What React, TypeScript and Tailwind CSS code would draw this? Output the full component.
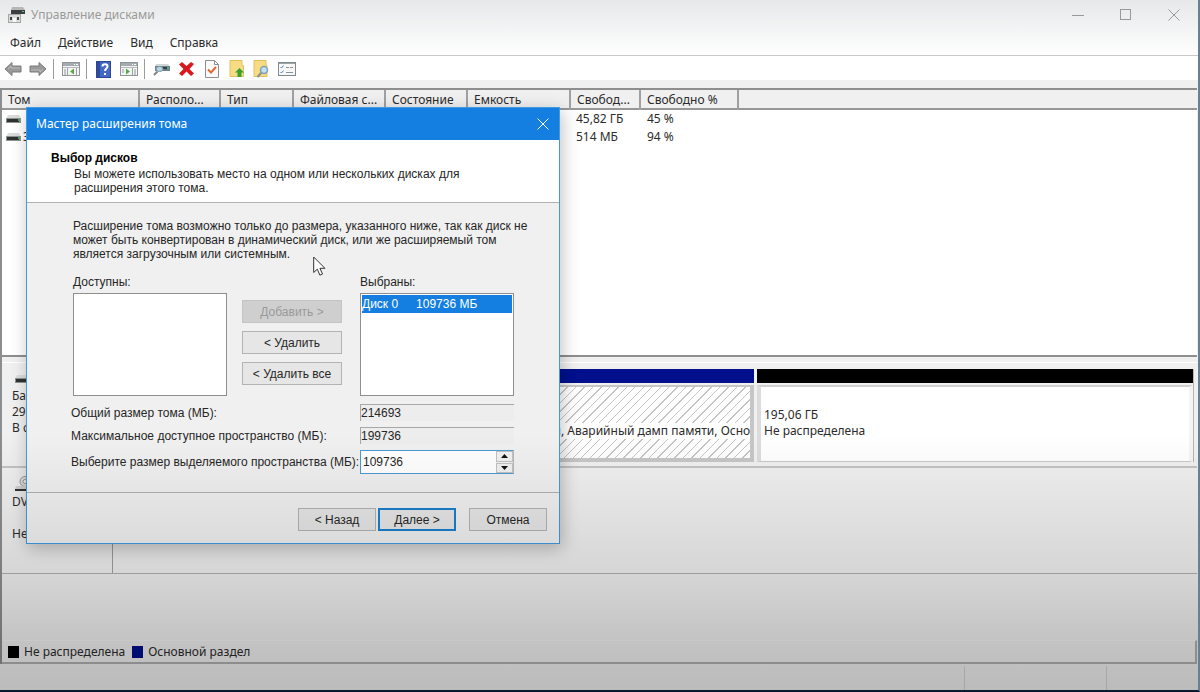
import React, { useState } from 'react';

const MENU = ['Файл', 'Действие', 'Вид', 'Справка'];

const COLUMNS = [
    { title: 'Том', width: 'w-[137px]' },
    { title: 'Располо...', width: 'w-[81px]' },
    { title: 'Тип', width: 'w-[73px]' },
    { title: 'Файловая с...', width: 'w-[92px]' },
    { title: 'Состояние', width: 'w-[82px]' },
    { title: 'Емкость', width: 'w-[103px]' },
    { title: 'Свобод...', width: 'w-[70px]' },
    { title: 'Свободно %', width: 'w-[98px]' },
];

const VOLUMES = [
    { name: '', free: '45,82 ГБ', percent: '45 %' },
    { name: 'З', free: '514 МБ', percent: '94 %' },
];

const DriveIcon: React.FC = () => (
    <svg width="15" height="9" viewBox="0 0 15 9" className="shrink-0">
        <path d="M2 0h11l2 4H0z" fill="#d9dcdb" />
        <rect y="3" width="15" height="5" fill="#8d9391" />
        <rect x="1" y="4" width="12" height="3" fill="#2e3332" />
        <rect x="12" y="4" width="2" height="2" fill="#4fa070" />
    </svg>
);

const AppIcon: React.FC = () => (
    <svg width="17" height="17" viewBox="0 0 17 17">
        <path d="M4 0h11l2 3H3z" fill="#b4b8b6" />
        <rect x="3" y="3" width="14" height="4" fill="#3b3f3f" />
        <rect x="14" y="4" width="2" height="1" fill="#63b383" />
        <path d="M0 7h13v9H0z" fill="#a4a7a6" />
        <path d="M1 8h11v7H1z" fill="#dcdcdc" />
        <path d="M2 10h2v3H2zM9 10h2v3H9z" fill="#444" />
        <path d="M5 11h3v4H5z" fill="#fff" />
    </svg>
);

const ArrowIcon: React.FC<{ flip?: boolean }> = ({ flip }) => (
    <svg width="18" height="16" viewBox="0 0 18 16" className={flip ? 'rotate-180' : ''}>
        <path d="M1 8l7-6.5V5h9v6H8v3.5z" fill="#9a9a9a" stroke="#7b7b7b" strokeLinejoin="round" />
        <path d="M4 8l3-3v2h9" fill="none" stroke="#b9b9b9" />
    </svg>
);

const ConsoleIcon: React.FC<{ right?: boolean }> = ({ right }) => (
    <svg width="18" height="16" viewBox="0 0 18 16">
        <rect x=".5" y="1.5" width="17" height="13" fill="#f5f5f5" stroke="#8f9496" />
        <rect x="1" y="2" width="16" height="3" fill="#a4acb1" />
        <path d="M12 3.5h1M14 3.5h2" stroke="#fff" />
        <path d="M1 6.5h16" stroke="#b5babd" />
        {right ? (
            <>
                <path d="M12.5 7v7" stroke="#9ba1a5" />
                <path d="M14 9h2M14 11h2M14 13h2M2 9h2M2 11h2" stroke="#8c969c" />
                <path d="M6 7.5v6l4-3z" fill="#57a844" />
            </>
        ) : (
            <>
                <path d="M5.5 7v7M14.5 7v7" stroke="#9ba1a5" />
                <path d="M2 9h2M2 11h2M2 13h2" stroke="#8c969c" />
                <path d="M12 7.5v6l-4-3z" fill="#57a844" />
            </>
        )}
    </svg>
);

const HelpIcon: React.FC = () => (
    <svg width="15" height="17" viewBox="0 0 15 17">
        <rect x=".5" y=".5" width="14" height="16" fill="#4468c4" stroke="#2d4690" />
        <rect x="1" y="1" width="3" height="15" fill="#2f4b9e" />
        <path d="M6.500 5.500c0-3 5-3 5 0 0 2-2.500 2-2.500 4.500" fill="none" stroke="#fff" strokeWidth="2" />
        <rect x="8" y="12" width="2" height="2" fill="#fff" />
    </svg>
);

const DriveSearchIcon: React.FC = () => (
    <svg width="17" height="16" viewBox="0 0 17 16">
        <path d="M3 3h12l2 3H2z" fill="#cfd6d8" />
        <rect x="2" y="5" width="15" height="5" fill="#6f8088" />
        <rect x="9" y="6" width="6" height="2" fill="#2f3d44" />
        <rect x="14" y="6" width="2" height="2" fill="#4fb08a" />
        <ellipse cx="6.500" cy="8" rx="3.500" ry="2.500" fill="#b6d4e3" stroke="#7d98a6" />
        <path d="M4.500 10.500L1 14" stroke="#7c8589" strokeWidth="2" />
    </svg>
);

const DeleteIcon: React.FC = () => (
    <svg width="17" height="16" viewBox="0 0 17 16">
        <path d="M1 3.500L4 1l4.500 4L13 1l3 2-4.500 5 4.500 4.500-3 2.500-4.500-4.500L4 15l-3-2.500L5.500 8z" fill="#d8181c" />
    </svg>
);

const DocCheckIcon: React.FC = () => (
    <svg width="14" height="18" viewBox="0 0 14 18">
        <path d="M.5.5h9l4 4v13H.5z" fill="#fafafa" stroke="#8d8d8d" />
        <path d="M9.500.5v4h4" fill="none" stroke="#8d8d8d" />
        <path d="M3 9.500l3 3 5-5.500" fill="none" stroke="#dd6a33" strokeWidth="2" />
    </svg>
);

const FolderUpIcon: React.FC = () => (
    <svg width="16" height="18" viewBox="0 0 16 18">
        <path d="M1 .5h12v5h1.500v11H1z" fill="#f7dc84" stroke="#e3c15c" />
        <path d="M10.500 8l4.500 4.500h-2.500V17h-4v-4.500H6z" fill="#3c9f35" />
    </svg>
);

const FolderSearchIcon: React.FC = () => (
    <svg width="17" height="18" viewBox="0 0 17 18">
        <path d="M1 .5h12v5h1v11H1z" fill="#f7dc84" stroke="#e3c15c" />
        <path d="M8.500 12.500L4.500 17" stroke="#8a8f93" strokeWidth="2" />
        <circle cx="11" cy="10" r="3.500" fill="#c4e0f0" stroke="#7ea3b8" strokeWidth="1.500" />
    </svg>
);

const ListIcon: React.FC = () => (
    <svg width="18" height="14" viewBox="0 0 18 14">
        <rect x=".5" y=".5" width="17" height="13" fill="#f8f8f8" stroke="#83888b" />
        <path d="M1 1.500h16" stroke="#9fa6aa" />
        <path d="M2.500 5l1 1 2-2.500M2.500 10l1 1 2-2.500" fill="none" stroke="#4a86c5" />
        <path d="M8 5.500h3M12 5.500h3M8 10.500h7" stroke="#88929a" />
    </svg>
);

const TOOLS = [
    { label: 'Назад', icon: <ArrowIcon /> },
    { label: 'Вперед', icon: <ArrowIcon flip />, divider: true },
    { label: 'Дерево консоли', icon: <ConsoleIcon />, divider: true },
    { label: 'Справка', icon: <HelpIcon /> },
    { label: 'Панель действий', icon: <ConsoleIcon right />, divider: true },
    { label: 'Подключить диск', icon: <DriveSearchIcon /> },
    { label: 'Удалить', icon: <DeleteIcon /> },
    { label: 'Проверить', icon: <DocCheckIcon /> },
    { label: 'Вверх', icon: <FolderUpIcon /> },
    { label: 'Поиск', icon: <FolderSearchIcon /> },
    { label: 'Свойства', icon: <ListIcon /> },
];

const CaptionButtons: React.FC = () => (
    <div className="flex text-[#999]">
        <button aria-label="Свернуть" className="flex h-[30px] w-12 items-center justify-center">
            <svg width="12" height="12" viewBox="0 0 12 12" stroke="currentColor"><path d="M0 6.500h12" /></svg>
        </button>
        <button aria-label="Развернуть" className="flex h-[30px] w-12 items-center justify-center">
            <svg width="12" height="12" viewBox="0 0 12 12" stroke="currentColor" fill="none"><rect x=".5" y=".5" width="10" height="10" /></svg>
        </button>
        <button aria-label="Закрыть" className="flex h-[30px] w-12 items-center justify-center">
            <svg width="12" height="12" viewBox="0 0 12 12" stroke="currentColor"><path d="M.5.5l11 11M11.500.5l-11 11" /></svg>
        </button>
    </div>
);

const VolumeTable: React.FC = () => (
    <div className="h-[269px] border-t-2 border-b-2 border-[#8e8e8e] bg-white">
        <table className="w-full table-fixed border-collapse text-left">
            <thead>
                <tr className="h-[19px] border-b-2 border-[#979797] bg-[#f0f0f0]">
                    {COLUMNS.map(col => (
                        <th key={col.title} className={`${col.width} overflow-hidden border-r-2 border-[#a0a0a0] pt-px pb-0 pl-[6px] font-normal whitespace-nowrap`}>
                            {col.title}
                        </th>
                    ))}
                    <th aria-hidden="true" />
                </tr>
            </thead>
            <tbody className="leading-[18px]">
                {VOLUMES.map(volume => (
                    <tr key={volume.free}>
                        <td className="p-0 pl-1">
                            <div className="flex items-center gap-[2px]"><DriveIcon />{volume.name}</div>
                        </td>
                        <td colSpan={5} />
                        <td className="p-0 pl-[6px] whitespace-nowrap">{volume.free}</td>
                        <td className="p-0 pl-[7px] whitespace-nowrap">{volume.percent}</td>
                        <td />
                    </tr>
                ))}
            </tbody>
        </table>
    </div>
);

const HATCH = 'bg-[repeating-linear-gradient(135deg,#fff_0px,#fff_5px,#c4c4c4_5px,#c4c4c4_6px)]';

const DiskMap: React.FC = () => (
    <div className="flex-1 bg-[#f0f0f0] pt-[5px]">
        <div className="flex h-[106px] border-t border-b-2 border-t-white border-b-[#c4c4c4]">
            <div className="w-[111px] shrink-0 border-r border-[#a0a0a0] pt-3 pl-[10px] leading-4">
                <div className="h-[13px] pl-[3px]"><DriveIcon /></div>
                <p>Базовый</p>
                <p>298,09 ГБ</p>
                <p>В сети</p>
            </div>
            <div className="flex min-w-0 flex-1 gap-[3px] pt-[6px] pr-[3px] pb-1 pl-[3px]">
                <div className="flex w-[218px] shrink-0 flex-col gap-[3px]">
                    <div className="h-[14px] bg-[#00108c]" />
                    <div className="flex-1 border border-[#bbb] bg-white" />
                </div>
                <div className="flex w-[417px] shrink-0 flex-col gap-[2px]">
                    <div className="h-[14px] bg-[#00108c]" />
                    <div className={`flex flex-1 items-center border-2 border-r-4 border-b-4 border-[#c6c6c6] pt-4 ${HATCH}`}>
                        <p className="w-full overflow-hidden bg-white pl-3 leading-4 whitespace-nowrap">
                            Исправен (Загрузка, Файл подкачки, Аварийный дамп памяти, Осно
                        </p>
                    </div>
                </div>
                <div className="flex min-w-0 flex-1 flex-col gap-[2px] border-r border-[#b4b4b4]">
                    <div className="h-[14px] bg-black" />
                    <div className="flex flex-1 flex-col justify-center border-t-2 border-r-4 border-b border-l-4 border-t-[#d0d0d0] border-r-[#f4f4f4] border-b-[#c8c8c8] border-l-[#dcdcdc] bg-white pb-[2px] pl-[3px] leading-4">
                        <p>195,06 ГБ</p>
                        <p>Не распределена</p>
                    </div>
                </div>
            </div>
        </div>
        <div className="flex h-[106px] border-b border-[#b0b0b0]">
            <div className="w-[111px] shrink-0 border-r border-[#a0a0a0] pt-2 pl-[10px] leading-4">
                <svg width="20" height="18" viewBox="0 0 20 18" className="ml-[2px]">
                    <circle cx="11" cy="5.500" r="5" fill="#e0e0e0" stroke="#999" />
                    <circle cx="11" cy="5.500" r="2" fill="#f5f5f5" stroke="#999" />
                    <path d="M2 10h15l2 3H1z" fill="#d3d3d3" />
                    <path d="M1 13h16v2H1z" fill="#333" />
                </svg>
                <p>DVD (D:)</p>
                <p className="pt-4">Нет носителя</p>
            </div>
        </div>
    </div>
);

const PushButton: React.FC<React.ButtonHTMLAttributes<HTMLButtonElement> & { primary?: boolean }> = ({ primary, className = '', ...rest }) => (
    <button
        {...rest}
        className={`flex h-[23px] items-center justify-center bg-[#e6e6e6] disabled:border-[#c4c4c4] disabled:bg-[#cfcfcf] disabled:text-[#9a9a9a] ${primary ? 'border-2 border-[#1a7fcc]' : 'border border-[#b3b3b3]'} ${className}`}
    />
);

const ExtendWizard: React.FC = () => {
    const [size, setSize] = useState(109736);

    return (
        <section
            role="dialog"
            aria-labelledby="wizard-title"
            className="absolute top-[107px] left-[26px] w-[534px] border border-[#3f9ae0] bg-[#f0f0f0] font-['Liberation_Sans',Arial,sans-serif] text-[12px] leading-[14px] text-[#262626] shadow-[2px_4px_16px_rgba(0,0,0,0.25)]"
        >
            <header className="flex h-8 items-center justify-between bg-[#147fe0] px-[9px] font-['Noto_Sans',sans-serif] text-white">
                <h1 id="wizard-title">Мастер расширения тома</h1>
                <button aria-label="Закрыть" className="p-px">
                    <svg width="12" height="12" viewBox="0 0 12 12" stroke="currentColor"><path d="M.5.5l11 11M11.500.5l-11 11" /></svg>
                </button>
            </header>

            <div className="h-[63px] border-b border-[#b0b0b0] bg-white pt-[11px] pl-6">
                <h2 className="font-bold text-black">Выбор дисков</h2>
                <p className="pt-[2px] pl-[23px]">
                    Вы можете использовать место на одном или нескольких дисках для<br />
                    расширения этого тома.
                </p>
            </div>

            <div className="h-[290px] border-b border-[#b0b0b0] pt-4 pr-[45px] pl-[46px]">
                <p className="-mr-8">
                    Расширение тома возможно только до размера, указанного ниже, так как диск не<br />
                    может быть конвертирован в динамический диск, или же расширяемый том<br />
                    является загрузочным или системным.
                </p>

                <div className="flex pt-[14px]">
                    <div className="w-[154px]">
                        <p id="available" className="pb-1">Доступны:</p>
                        <ul role="listbox" aria-labelledby="available" className="h-[103px] border border-[#8f8f8f] bg-white" />
                    </div>
                    <div className="ml-[15px] flex w-[100px] flex-col gap-2 pt-[25px]">
                        <PushButton disabled>Добавить &gt;</PushButton>
                        <PushButton>&lt; Удалить</PushButton>
                        <PushButton>&lt; Удалить все</PushButton>
                    </div>
                    <div className="ml-[18px] w-[154px]">
                        <p id="selected" className="pb-1">Выбраны:</p>
                        <ul role="listbox" aria-labelledby="selected" className="h-[103px] border border-[#8f8f8f] bg-white p-px">
                            <li role="option" aria-selected="true" className="flex h-[18px] items-center gap-[18px] bg-[#147fe0] text-white">
                                <span>Диск 0</span>
                                <span>109736 МБ</span>
                            </li>
                        </ul>
                    </div>
                </div>

                <div className="-ml-[2px] flex flex-col gap-[6px] pt-2">
                    <div className="flex items-center justify-between">
                        <label htmlFor="total">Общий размер тома (МБ):</label>
                        <input id="total" readOnly value="214693" className="h-[17px] w-[154px] border-t border-l border-[#a8a8a8] bg-[#ededed]" />
                    </div>
                    <div className="flex items-center justify-between">
                        <label htmlFor="max">Максимальное доступное пространство (МБ):</label>
                        <input id="max" readOnly value="199736" className="h-[17px] w-[154px] border-t border-l border-[#a8a8a8] bg-[#ededed]" />
                    </div>
                    <div className="flex items-center justify-between">
                        <label htmlFor="size" className="whitespace-nowrap">Выберите размер выделяемого пространства (МБ):</label>
                        <div className="flex h-6 w-[154px] shrink-0 border border-[#4b9bd0] border-r-[#b8b8b8] bg-white">
                            <input
                                id="size"
                                inputMode="numeric"
                                value={size}
                                onChange={e => setSize(Number(e.target.value) || 0)}
                                className="min-w-0 flex-1 pl-[2px] outline-none"
                            />
                            <div className="flex w-[17px] flex-col gap-px bg-[#f0f0f0]">
                                <button aria-label="Больше" onClick={() => setSize(size + 1)} className="flex flex-1 items-center justify-center border border-[#c2c2c2]">
                                    <svg width="7" height="4" viewBox="0 0 7 4"><path d="M0 4l3.500-4L7 4z" fill="#111" /></svg>
                                </button>
                                <button aria-label="Меньше" onClick={() => setSize(size - 1)} className="flex flex-1 items-center justify-center border border-[#c2c2c2]">
                                    <svg width="7" height="4" viewBox="0 0 7 4"><path d="M0 0l3.500 4L7 0z" fill="#111" /></svg>
                                </button>
                            </div>
                        </div>
                    </div>
                </div>
            </div>

            <footer className="flex justify-end pt-[15px] pr-3 pb-3">
                <PushButton className="w-[78px]">&lt; Назад</PushButton>
                <PushButton primary className="ml-[2px] w-[78px]">Далее &gt;</PushButton>
                <PushButton className="ml-[13px] w-[78px]">Отмена</PushButton>
            </footer>
        </section>
    );
};

export default function App() {
    return (
        <div className="relative flex min-h-screen flex-col overflow-hidden border-r-2 border-b-2 border-r-[#6b7f93] border-b-[#0b1a2c] bg-[#f0f0f0] font-['Noto_Sans',sans-serif] text-[12px] leading-4 text-[#2b2b2b]">
            <div className="bg-linear-to-b from-[#e6e8e9] to-white">
                <header className="flex h-[30px] items-center justify-between pl-2">
                    <div className="flex items-center gap-[6px] text-[#9a9a9a]">
                        <AppIcon />
                        <h1>Управление дисками</h1>
                    </div>
                    <CaptionButtons />
                </header>
                <nav className="flex h-[26px] items-center gap-[17px] border-b border-[#c8c8c8] pl-[10px]">
                    {MENU.map(item => <button key={item}>{item}</button>)}
                </nav>
            </div>

            <div className="flex h-6 items-center bg-white pt-[2px]">
                {TOOLS.map(tool => (
                    <React.Fragment key={tool.label}>
                        <button aria-label={tool.label} className="flex w-[25px] items-center justify-center">{tool.icon}</button>
                        {tool.divider && <span className="mr-1 ml-[3px] h-5 w-px bg-[#9c9c9c]" />}
                    </React.Fragment>
                ))}
            </div>

            <main className="mt-2 mr-px flex flex-1 flex-col border-l-2 border-[#8b8e91]">
                <VolumeTable />
                <DiskMap />
                <div className="flex h-6 items-center gap-[5px] border-t border-r-2 border-b-2 border-t-[#f6f6f6] border-r-[#b0b0b0] border-b-[#b0b0b0] pl-[6px]">
                    <span className="h-3 w-[11px] bg-black" />
                    <span>Не распределена</span>
                    <span className="ml-[2px] h-3 w-[11px] bg-[#00108c]" />
                    <span>Основной раздел</span>
                </div>
            </main>
            <footer className="flex h-[26px] justify-end pt-[2px]">
                <div className="w-[142px] border-l border-[#d4d4d4]" />
                <div className="w-[92px] border-l border-[#d4d4d4]" />
            </footer>

            <ExtendWizard />

            <svg width="13" height="21" viewBox="0 0 13 21" className="absolute top-[256px] left-[313px]">
                <path d="M.7 1v15.500l3.600-3.300 2.600 6 2.600-1.200-2.600-5.700h5z" fill="#fff" stroke="#333" />
            </svg>

            <div className="pointer-events-none absolute inset-0 bg-[linear-gradient(to_bottom,transparent_63%,rgba(0,0,0,0.11)_83%,rgba(0,0,0,0.19)_93%,rgba(0,0,0,0.22)_100%)]" />
        </div>
    );
}
